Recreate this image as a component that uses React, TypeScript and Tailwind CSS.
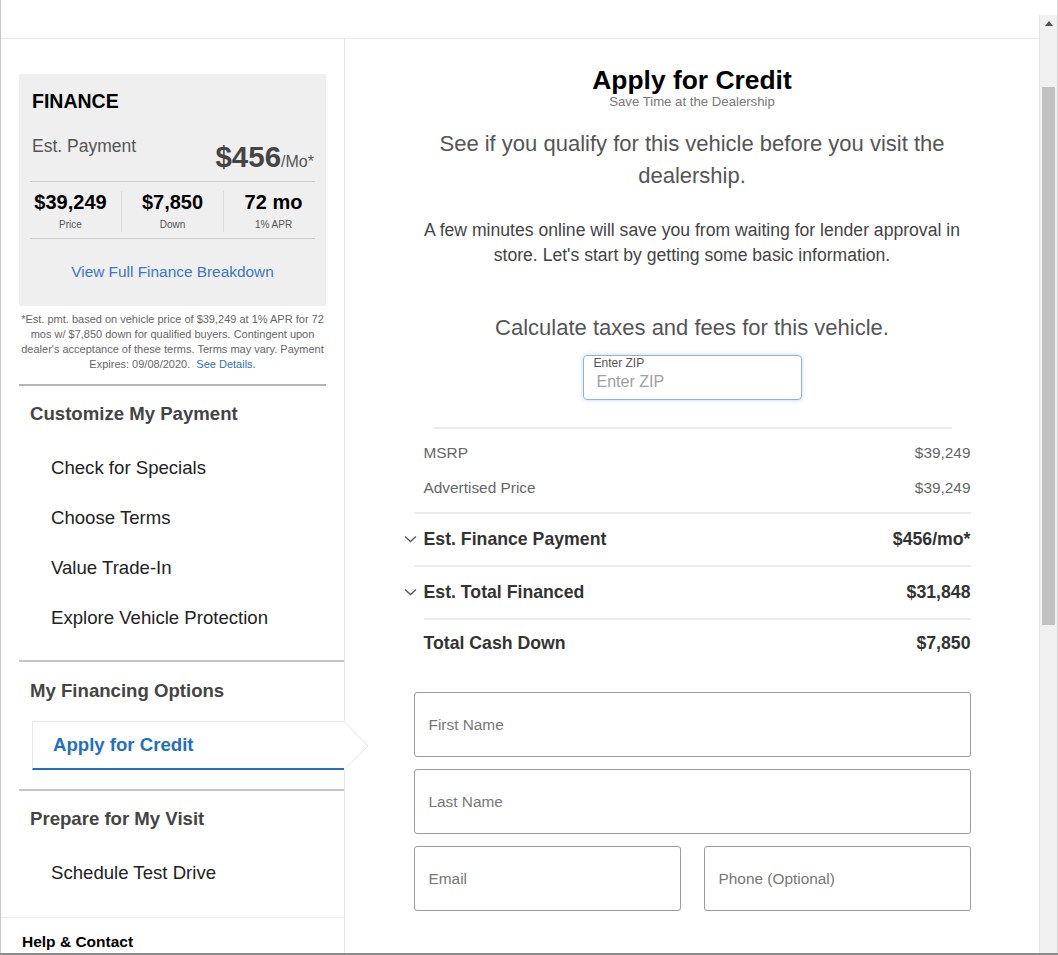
import React from "react";

const Chevron = () => (
  <svg width="13" height="8" viewBox="0 0 13 8" className="shrink-0">
    <polyline points="1,1.5 6.5,6.5 12,1.5" fill="none" stroke="#555" strokeWidth="1.3" />
  </svg>
);

const FieldBox = ({ label, className }: { label: string; className?: string }) => (
  <input
    placeholder={label}
    className={`h-[65px] border border-[#9c9c9c] rounded-[3px] px-[14px] text-[15.4px] text-[#333] placeholder:text-[#777] outline-none ${className ?? ""}`}
  />
);

const Sidebar = () => {
  return (
    <aside className="w-[344px] shrink-0 border-r border-[#e6e6e6] flex flex-col">
      <div className="pl-[18px] pt-[35px]">
        <div className="bg-[#efefef] w-[307px] h-[232px] rounded-[2px] pt-[16px] px-[11px]">
          <div className="pl-[2px] text-[19.5px] font-bold leading-[22px] text-black">FINANCE</div>
          <div className="h-[70px] flex justify-between border-b border-[#cdcdcd]">
            <div className="pl-[2px] pt-[24px] text-[17.5px] leading-[20px] text-[#555]">Est. Payment</div>
            <div className="flex items-baseline self-end pb-[7px] pr-[1px]">
              <span className="text-[29.5px] font-bold leading-none text-[#444]">$456</span>
              <span className="text-[16px] text-[#555]">/Mo*</span>
            </div>
          </div>
          <div className="grid grid-cols-[91px_102px_1fr] pt-[9px] pb-[6px] border-b border-[#cdcdcd]">
            <div className="h-[41px] flex flex-col items-center pr-[10px]">
              <div className="text-[20px] font-bold leading-[22px] text-black">$39,249</div>
              <div className="mt-[6px] text-[10px] leading-[12px] text-[#555]">Price</div>
            </div>
            <div className="h-[41px] flex flex-col items-center border-l border-[#dcdcdc]">
              <div className="text-[20px] font-bold leading-[22px] text-black">$7,850</div>
              <div className="mt-[6px] text-[10px] leading-[12px] text-[#555]">Down</div>
            </div>
            <div className="h-[41px] flex flex-col items-center border-l border-[#dcdcdc] pl-[8px]">
              <div className="text-[20px] font-bold leading-[22px] text-black">72 mo</div>
              <div className="mt-[6px] text-[10px] leading-[12px] text-[#555]">1% APR</div>
            </div>
          </div>
          <div className="mt-[24px] text-center text-[15.4px] leading-[18px] text-[#3a78c4]">View Full Finance Breakdown</div>
        </div>
        <p className="w-[307px] mt-[6px] text-center text-[11px] leading-[15px] text-[#666]">
          *Est. pmt. based on vehicle price of $39,249 at 1% APR for 72
          <br />
          mos w/ $7,850 down for qualified buyers. Contingent upon
          <br />
          dealer's acceptance of these terms. Terms may vary. Payment
          <br />
          Expires: 09/08/2020.&nbsp; <span className="text-[#2f6fc0]">See Details.</span>
        </p>
        <div className="w-[307px] mt-[12px] h-[2px] bg-[#b4b4b4]" />

        <div className="mt-[17px] pl-[11px] text-[18.6px] font-bold leading-[22px] text-[#444]">Customize My Payment</div>
        <div className="mt-[18px] flex flex-col text-[18.6px] text-[#222]">
          {["Check for Specials", "Choose Terms", "Value Trade-In", "Explore Vehicle Protection"].map((s) => (
            <div key={s} className="h-[50px] leading-[50px] pl-[32px]">{s}</div>
          ))}
        </div>
        <div className="mt-[17px] h-[2px] bg-[#c4c4c4]" />

        <div className="mt-[18px] pl-[11px] text-[18.6px] font-bold leading-[22px] text-[#444]">My Financing Options</div>
        <div className="relative mt-[19px] ml-[13px] h-[49px] border-t border-l border-[#e8e8e8] border-b-2 border-b-[#1f6fc5] flex items-center pl-[20px]">
          <span className="text-[18.6px] font-bold text-[#1f6fc5]">Apply for Credit</span>
          <svg width="25" height="50" viewBox="0 0 25 50" className="absolute left-full top-[-1px]">
            <polygon points="0,0 24,25 0,50" fill="#fff" />
            <polyline points="0,0.5 24,25 0,48.5" fill="none" stroke="#e6e6e6" strokeWidth="1" />
          </svg>
        </div>
        <div className="mt-[19px] h-[2px] bg-[#c4c4c4]" />

        <div className="mt-[17px] pl-[11px] text-[18.6px] font-bold leading-[22px] text-[#444]">Prepare for My Visit</div>
        <div className="mt-[18px] h-[50px] leading-[50px] pl-[32px] text-[18.6px] text-[#222]">Schedule Test Drive</div>
      </div>
      <div className="mt-[19px] h-[1px] bg-[#ececec]" />
      <div className="mt-[15px] pl-[21px] text-[15.5px] font-bold leading-[18px] text-black">Help &amp; Contact</div>
    </aside>
  );
};

const PriceRow = ({ label, value }: { label: string; value: string }) => (
  <div className="h-[35px] flex items-center justify-between pl-[10px] text-[15.4px] text-[#666]">
    <span>{label}</span>
    <span>{value}</span>
  </div>
);

const TotalRow = ({ label, value, chevron }: { label: string; value: string; chevron?: boolean }) => (
  <div className="h-[51px] flex items-center justify-between text-[17.7px] font-bold text-[#333]">
    <div className={`flex items-center ${chevron ? "" : "pl-[10px]"}`}>
      {chevron && (
        <span className="-ml-[10px] mr-[7px] flex">
          <Chevron />
        </span>
      )}
      <span>{label}</span>
    </div>
    <span>{value}</span>
  </div>
);

const Main = () => {
  return (
    <main className="flex-1 flex flex-col items-center pt-[26px]">
      <h1 className="text-[26.4px] font-bold leading-[30px] text-black">Apply for Credit</h1>
      <div className="mt-[-1px] text-[13.2px] leading-[15px] text-[#777]">Save Time at the Dealership</div>
      <p className="mt-[19px] w-[540px] text-center text-[22px] leading-[32px] text-[#555]">
        See if you qualify for this vehicle before you visit the dealership.
      </p>
      <p className="mt-[26px] w-[545px] text-center text-[17.6px] leading-[25px] text-[#444]">
        A few minutes online will save you from waiting for lender approval in store. Let's start by getting some basic information.
      </p>
      <div className="mt-[47px] text-[22px] leading-[26px] text-[#555]">Calculate taxes and fees for this vehicle.</div>
      <div className="mt-[14px] w-[219px] h-[45px] rounded-[4px] border border-[#8bb1e6] shadow-[0_0_5px_rgba(90,140,220,0.35)] flex flex-col">
        <div className="pl-[10px] text-[12px] leading-[14px] text-[#555]">Enter ZIP</div>
        <input
          placeholder="Enter ZIP"
          className="mt-[2px] pl-[13px] text-[16px] leading-[19px] text-[#333] placeholder:text-[#a0a0a0] outline-none bg-transparent"
        />
      </div>
      <div className="mt-[27px] w-[519px] h-[2px] bg-[#ebebeb]" />
      <div className="w-[557px] mt-[6px]">
        <PriceRow label="MSRP" value="$39,249" />
        <PriceRow label="Advertised Price" value="$39,249" />
        <div className="mt-[7px] h-[2px] bg-[#ececec]" />
        <TotalRow label="Est. Finance Payment" value="$456/mo*" chevron />
        <div className="h-[2px] bg-[#ececec]" />
        <TotalRow label="Est. Total Financed" value="$31,848" chevron />
        <div className="ml-[10px] h-[2px] bg-[#ececec]" />
        <div className="-mt-[2px]">
          <TotalRow label="Total Cash Down" value="$7,850" />
        </div>
        <div className="mt-[23px] flex flex-col gap-[12px]">
          <FieldBox label="First Name" className="w-full" />
          <FieldBox label="Last Name" className="w-full h-[64px]" />
          <div className="flex gap-[23px]">
            <FieldBox label="Email" className="w-[267px]" />
            <FieldBox label="Phone (Optional)" className="w-[267px]" />
          </div>
        </div>
      </div>
    </main>
  );
};

const Scrollbar = () => (
  <div className="w-[18px] pt-[15px] flex flex-col">
    <div className="flex-1 bg-[#f1f1f1] border-l border-[#e4e4e4] flex flex-col">
      <div className="h-[17px] flex items-center justify-center">
        <svg width="8" height="5" viewBox="0 0 8 5">
          <polygon points="0,5 4,0 8,5" fill="#505050" />
        </svg>
      </div>
      <div className="mt-[55px] ml-[2px] w-[13px] h-[538px] bg-[#c1c1c1]" />
    </div>
  </div>
);

export default function App() {
  return (
    <div className="w-[1058px] h-[955px] overflow-hidden bg-white flex flex-col font-['Liberation_Sans',Arial,sans-serif]">
      <div className="flex flex-1 min-h-0">
        <div className="flex-1 flex flex-col border-l border-[#c8c8c8] min-w-0">
          <div className="h-[39px] shrink-0 border-b border-[#e8e8e8]" />
          <div className="flex flex-1 min-h-0">
            <Sidebar />
            <Main />
          </div>
        </div>
        <Scrollbar />
        <div className="w-[1px] bg-[#d8d8d8]" />
      </div>
      <div className="h-[2px] bg-[#8a8a8a] shrink-0" />
    </div>
  );
}
